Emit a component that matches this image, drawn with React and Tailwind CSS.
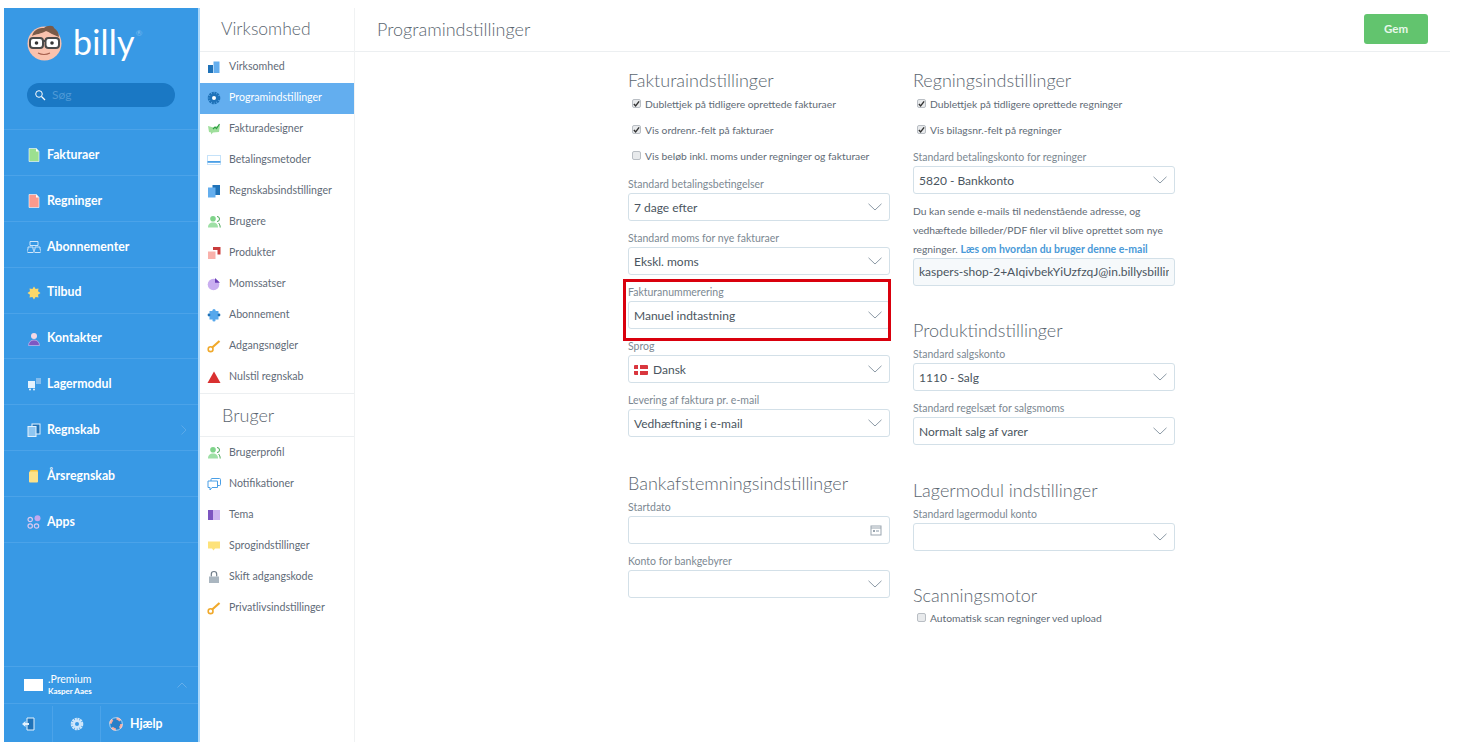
import React from "react";

const S = ({ children, size = 14, vb = "0 0 14 14" }) => (
  <svg width={size} height={size} viewBox={vb} className="shrink-0">{children}</svg>
);

const icons = {
  doc: (f, d) => (<S><path d="M2 .5h7.5L12 3.5V13.5H2z" fill={f} stroke="#fff" strokeWidth=".6" /><path d="M9 .5l3 3H9z" fill={d} /></S>),
  sub: () => (<S><path d="M3 1.5h8v4h-8zM1 7h5v2.5a1.5 1.5 0 01-1 3h-3a1.5 1.5 0 01-1-3zM8 7h5v2.5a1.5 1.5 0 01-1 3h-3a1.5 1.5 0 01-1-3z" fill="none" stroke="#cfe6fa" strokeWidth="1" /></S>),
  star: () => (<S><path d="M7 .5l1.6 2.4 2.9-.5-.5 2.9L13.5 7 11 8.7l.5 2.9-2.9-.5L7 13.5l-1.6-2.4-2.9.5.5-2.9L.5 7 3 5.3l-.5-2.9 2.9.5z" fill="#fcd86a" /></S>),
  person: () => (<S><circle cx="7" cy="4" r="3" fill="#f4d8e4" /><path d="M1.5 13.5c0-3.5 2.5-5.5 5.5-5.5s5.5 2 5.5 5.5z" fill="#7e57c2" stroke="#d9c8f0" strokeWidth=".6" /></S>),
  lager: () => (<S><rect x="1" y="4" width="7" height="7" fill="#e4f2fd" /><rect x="9" y="1" width="5" height="6" fill="#83bdee" /><circle cx="3" cy="12.5" r="1" fill="#e4f2fd" /><circle cx="7" cy="12.5" r="1" fill="#e4f2fd" /></S>),
  regn: () => (<S><rect x="5" y="1" width="8" height="10" fill="#1f72b8" stroke="#e4f2fd" /><rect x="1" y="3.5" width="8" height="10" fill="#8fc6f1" stroke="#e4f2fd" /></S>),
  aars: () => (<S><rect x="3" y="1" width="8" height="11" rx="1" fill="#f9c740" /><rect x="2" y="2.5" width="9" height="11" rx="1" fill="#fde28a" /></S>),
  apps: () => (<S><circle cx="3.2" cy="4.5" r="2.2" fill="none" stroke="#d9c8f0" strokeWidth="1.2" /><circle cx="10.5" cy="3.2" r="3" fill="#c4a8ee" /><circle cx="3.2" cy="11" r="2.2" fill="none" stroke="#d9c8f0" strokeWidth="1.2" /><circle cx="9.5" cy="11" r="2.2" fill="none" stroke="#d9c8f0" strokeWidth="1.2" /></S>),
  bars: () => (<S><rect x="1" y="5" width="5" height="8" fill="#1f72b8" /><rect x="6.5" y="1.5" width="6" height="11.5" fill="#64aeee" /></S>),
  gear: (bg = "#1f72b8", c = "#fff") => (<S><circle cx="7" cy="7" r="5" fill="none" stroke={bg} strokeWidth="2.6" strokeDasharray="2 .6" /><circle cx="7" cy="7" r="4.4" fill={bg} /><circle cx="7" cy="7" r="2" fill={c} /></S>),
  design: () => (<S><path d="M1 4l5.5 1.5L13 3l-1 7-6 .5-2 2v-2L2 10z" fill="#9fdf9c" /><path d="M6 7l2-2 1.5 1.5L12.5 2" fill="none" stroke="#2f9e44" strokeWidth="1.2" /></S>),
  card: () => (<S><rect x=".5" y="2.5" width="13" height="9" fill="#fff" stroke="#c5e2f9" /><rect x=".5" y="8" width="13" height="1.8" fill="#4a9fe6" /></S>),
  regnDark: () => (<S><rect x="5.5" y="1" width="7.5" height="10" fill="#1f72b8" /><rect x="1" y="3.5" width="7.5" height="10" fill="#64aeee" /></S>),
  users: () => (<S><circle cx="6" cy="3.8" r="2.8" fill="#7fd48a" /><path d="M1 12.5c0-3.5 2-5 5-5s5 1.5 5 5z" fill="#9fe0a6" /><path d="M10 1.5a2.5 2.5 0 010 5M11.5 8c1 1 1.7 2.5 1.7 4.5" fill="none" stroke="#4aa657" /></S>),
  products: () => (<S><rect x="1" y="5.5" width="7.5" height="7.5" fill="#f9b1ab" /><path d="M6 1h7.5v7.5h-3V4H6z" fill="#c93c3c" /></S>),
  pie: () => (<S><circle cx="6.5" cy="7.5" r="5.8" fill="#c9aef0" /><path d="M8 1l5 4.8H8z" fill="#6a3fb5" /></S>),
  puzzle: () => (<S><rect x="2.5" y="3" width="9" height="8.5" fill="#57a8ec" /><circle cx="7" cy="2.5" r="1.6" fill="#57a8ec" /><circle cx="7" cy="12" r="1.6" fill="#57a8ec" /><circle cx="2" cy="7" r="1.4" fill="#1f72b8" /><circle cx="12" cy="7" r="1.4" fill="#1f72b8" /></S>),
  key: () => (<S><circle cx="3.6" cy="10.2" r="2.4" fill="none" stroke="#f0a92b" strokeWidth="1.6" /><path d="M5.2 8.5L12.5 2" stroke="#f0a92b" strokeWidth="2.2" /></S>),
  warn: () => (<S><path d="M7 1.5L13.5 13H.5z" fill="#d93030" /></S>),
  chat: () => (<S><rect x="4" y="1.5" width="9.5" height="7" rx="1" fill="#fff" stroke="#4a9fe6" /><path d="M1 4h9.5v6.5H5L3 13v-2.5H1z" fill="#fff" stroke="#4a9fe6" /></S>),
  theme: () => (<S><rect x="1" y="2" width="5" height="10" fill="#7c55c0" /><rect x="6" y="2" width="7" height="10" fill="#cdb6f0" /></S>),
  bubble: () => (<S><path d="M1 2.5h12v7H8l-1.5 2-1.5-2H1z" fill="#fde27a" /></S>),
  lock: () => (<S><path d="M4.3 6.5V4.2a2.7 2.7 0 015.4 0v2.3" fill="none" stroke="#6f7c88" strokeWidth="1.2" /><rect x="2" y="6.5" width="10" height="6.5" fill="#aab6c0" /></S>),
};

const mainNav = [
  ["Fakturaer", icons.doc("#9ce08f", "#fff")],
  ["Regninger", icons.doc("#fb9a8d", "#fff")],
  ["Abonnementer", icons.sub()],
  ["Tilbud", icons.star()],
  ["Kontakter", icons.person()],
  ["Lagermodul", icons.lager()],
  ["Regnskab", icons.regn(), true],
  ["Årsregnskab", icons.aars()],
  ["Apps", icons.apps()],
];

const companyNav = [
  ["Virksomhed", icons.bars()],
  ["Programindstillinger", icons.gear("#1f72b8", "#fff"), true],
  ["Fakturadesigner", icons.design()],
  ["Betalingsmetoder", icons.card()],
  ["Regnskabsindstillinger", icons.regnDark()],
  ["Brugere", icons.users()],
  ["Produkter", icons.products()],
  ["Momssatser", icons.pie()],
  ["Abonnement", icons.puzzle()],
  ["Adgangsnøgler", icons.key()],
  ["Nulstil regnskab", icons.warn()],
];

const userNav = [
  ["Brugerprofil", icons.users()],
  ["Notifikationer", icons.chat()],
  ["Tema", icons.theme()],
  ["Sprogindstillinger", icons.bubble()],
  ["Skift adgangskode", icons.lock()],
  ["Privatlivsindstillinger", icons.key()],
];

const Chevron = () => (
  <svg width="14" height="8" viewBox="0 0 14 8" className="shrink-0"><path d="M.5 .8L7 7l6.5-6.2" fill="none" stroke="#8c9aa6" strokeWidth="1" /></svg>
);

const Logo = () => (
  <svg width="36" height="36" viewBox="0 0 36 36" className="mt-[-5px] shrink-0">
    <circle cx="17.5" cy="18.5" r="17" fill="#f9c2ae" />
    <path d="M5 11C7 4 12 3 17 3c3-3 10-3 10 0 3 2 5 5 5 9-6-2-10-5-13-6-5 3-10 3-14 5z" fill="#7a5a48" />
    <rect x="3" y="13" width="13" height="10" rx="3" fill="#fff" stroke="#4a4a4a" strokeWidth="2" />
    <rect x="18.5" y="13" width="13.5" height="10" rx="3" fill="#fff" stroke="#4a4a4a" strokeWidth="2" />
    <path d="M16 16h3" stroke="#4a4a4a" strokeWidth="2" />
    <circle cx="9.5" cy="18" r="1.8" fill="#333" />
    <circle cx="25" cy="18" r="1.8" fill="#333" />
    <path d="M11 28c4 2 8 2 12 0" fill="none" stroke="#a55f4d" strokeWidth="1.1" />
  </svg>
);

const Select = ({ value, flag, empty, icon }) => (
  <div className="flex h-[28px] items-center justify-between rounded-[3px] border border-[#d3e0e8] bg-white pl-[5px] pr-[7px] text-[12px] text-[#4a5560]">
    <span className="flex items-center gap-[5px] pt-[1px]">
      {flag && (
        <svg width="14" height="10" viewBox="0 0 14 10"><rect width="14" height="10" rx="1" fill="#d9363e" /><rect x="4" width="2" height="10" fill="#fff" /><rect y="4" width="14" height="2" fill="#fff" /></svg>
      )}
      {!empty && value}
    </span>
    {icon || <Chevron />}
  </div>
);

const Field = ({ label, className = "", ...p }) => (
  <div className={className}>
    <div className="flex h-[18px] items-center pt-[1px] text-[10.5px] text-[#7c8892]">{label}</div>
    <Select {...p} />
  </div>
);

const Heading = ({ children, className = "" }) => (
  <h2 className={`flex h-[21px] items-center text-[18px] font-light text-[#5b6670] ${className}`}>{children}</h2>
);

const Check = ({ label, checked, className = "" }) => (
  <label className={`flex h-[26px] items-center pt-[2px] text-[10.3px] text-[#5f6b76] ${className}`}>
    <span className="ml-[4px] mr-[4px] mb-[3px] flex h-[9px] w-[9px] items-center justify-center rounded-[2px] border border-[#b9bec4] bg-[#e8eaec]">
      {checked && <svg width="8" height="8" viewBox="0 0 8 8"><path d="M1 4l2 2.3L7 1" fill="none" stroke="#333" strokeWidth="1.6" /></svg>}
    </span>
    {label}
  </label>
);

const SubItem = ({ label, icon, active, raised }) => (
  <div className={`flex h-[31px] items-center gap-[8px] pl-[7px] text-[10.6px] ${raised ? "pb-[2px]" : ""} ${active ? "bg-[#63aeef] text-white" : "text-[#5f6b78]"}`}>
    {icon}
    <span>{label}</span>
  </div>
);

export default function App() {
  return (
    <div className="flex h-[750px] w-[1457px] overflow-hidden bg-white py-[8px] pl-[4px] font-['Lato','Open_Sans',sans-serif]">
      <aside className="flex w-[194px] shrink-0 flex-col bg-[#3899e5] text-white">
        <div className="h-[122px] shrink-0 border-b border-[#4ba3e9] pl-[23px]">
          <div className="flex h-[75px] items-center">
            <Logo />
            <span className="ml-[10px] mt-[-7px] text-[34px] font-normal leading-none tracking-[.2px]">billy</span>
            <span className="mb-[26px] ml-[1px] text-[8px] text-[#7fbff0]">®</span>
          </div>
          <div className="flex h-[24px] w-[148px] items-center gap-[6px] rounded-full bg-[#1a78c4] pl-[7px] text-[12px] text-[#4f9ad6]">
            <svg width="12" height="12" viewBox="0 0 12 12"><circle cx="5" cy="5" r="3.3" fill="none" stroke="#fff" /><path d="M7.5 7.5L11 11" stroke="#fff" strokeWidth="1.3" /></svg>
            <span>Søg</span>
          </div>
        </div>
        {mainNav.map(([label, icon, arrow]) => (
          <div key={label} className="flex h-[45.9px] shrink-0 items-center gap-[7px] border-b border-[#4ba3e9] pl-[23px] pr-[11px] pt-[5px] text-[12.3px] font-bold">
            <span className="flex w-[13px] justify-center">{icon}</span>
            <span>{label}</span>
            {arrow && (
              <svg width="6" height="10" viewBox="0 0 6 10" className="ml-auto"><path d="M.5.5L5 5 .5 9.5" fill="none" stroke="#5aa9e8" /></svg>
            )}
          </div>
        ))}
        <div className="flex-1" />
        <div className="flex h-[37px] shrink-0 items-center border-t border-[#4ba3e9] pl-[20px] pr-[11px]">
          <div className="h-[12px] w-[19px] bg-white" />
          <div className="ml-[5px] flex flex-col leading-[12px]">
            <span className="text-[10.5px]">.Premium</span>
            <span className="text-[8px] font-bold">Kasper Aaes</span>
          </div>
          <svg width="10" height="6" viewBox="0 0 10 6" className="ml-auto"><path d="M.5 5.5L5 1l4.5 4.5" fill="none" stroke="#64aeea" /></svg>
        </div>
        <div className="flex h-[39px] shrink-0 border-t border-[#4ba3e9] pt-[2px]">
          <div className="flex w-[49px] items-center justify-center border-r border-[#4ba3e9]">
            <S size={14}><path d="M6 1h7v12H6z" fill="#1f72b8" stroke="#e4f2fd" /><path d="M1 7l3.5-3v2H8v2H4.5v2z" fill="#e4f2fd" /></S>
          </div>
          <div className="flex w-[48px] items-center justify-center border-r border-[#4ba3e9]">{icons.gear("#cfe6fa", "#3899e5")}</div>
          <div className="flex items-center gap-[7px] pl-[8px] text-[12.3px] font-bold">
            <S size={14}><circle cx="7" cy="7" r="5.5" fill="#2a7fc8" stroke="#f3aaa0" strokeWidth="2.6" strokeDasharray="4.3 4.3" /><circle cx="7" cy="7" r="6.4" fill="none" stroke="#fff" strokeWidth=".5" /></S>
            <span>Hjælp</span>
          </div>
        </div>
      </aside>

      <nav className="flex w-[157px] shrink-0 flex-col border-l-2 border-r border-l-[#aad8fb] border-r-[#f0f2f3]">
        <div className="flex h-[44px] shrink-0 items-center border-b border-[#eceff1] pl-[21px] text-[17.5px] font-light text-[#5b6670]">Virksomhed</div>
        <div>
          {companyNav.map(([label, icon, active]) => (
            <SubItem key={label} label={label} icon={icon} active={active} raised />
          ))}
        </div>
        <div className="flex h-[44px] shrink-0 items-center border-y border-[#eceff1] pl-[22px] pt-[1px] text-[18px] font-light text-[#5b6670]">Bruger</div>
        <div>
          {userNav.map(([label, icon]) => (
            <SubItem key={label} label={label} icon={icon} />
          ))}
        </div>
      </nav>

      <main className="flex w-[1095px] shrink-0 flex-col">
        <header className="flex h-[44px] shrink-0 items-center justify-between border-b border-[#eceff1] pl-[22px] pr-[22px]">
          <h1 className="text-[18px] font-light text-[#5b6670]">Programindstillinger</h1>
          <button className="mt-[-2px] flex h-[30px] w-[64px] items-center justify-center rounded-[3px] bg-[#62c46e] text-[11.5px] font-bold text-[#e8f8ea]">Gem</button>
        </header>
        <div className="relative flex gap-[23px] pl-[273px] pt-[18px]">
          <section className="w-[262px]">
            <Heading>Fakturaindstillinger</Heading>
            <Check checked label="Dublettjek på tidligere oprettede fakturaer" />
            <Check checked label="Vis ordrenr.-felt på fakturaer" />
            <Check label="Vis beløb inkl. moms under regninger og fakturaer" />
            <div className="mt-[6px] flex flex-col gap-[8px]">
              <Field label="Standard betalingsbetingelser" value="7 dage efter" />
              <Field label="Standard moms for nye fakturaer" value="Ekskl. moms" />
              <Field label="Fakturanummerering" value="Manuel indtastning" />
              <Field label="Sprog" value="Dansk" flag />
              <Field label="Levering af faktura pr. e-mail" value="Vedhæftning i e-mail" />
            </div>
            <Heading className="mt-[36px]">Bankafstemningsindstillinger</Heading>
            <div className="mt-[4px] flex flex-col gap-[8px]">
              <Field
                label="Startdato"
                empty
                icon={<svg width="12" height="12" viewBox="0 0 12 12"><rect x="1" y="2" width="10" height="9" fill="none" stroke="#9aa5af" /><path d="M1 4h10" stroke="#9aa5af" /><rect x="3" y="6" width="2" height="2" fill="#9aa5af" /><rect x="6" y="6" width="3" height="2" fill="#c4ccd3" /></svg>}
              />
              <Field label="Konto for bankgebyrer" empty />
            </div>
          </section>
          <section className="w-[262px]">
            <Heading>Regningsindstillinger</Heading>
            <Check checked label="Dublettjek på tidligere oprettede regninger" />
            <Check checked label="Vis bilagsnr.-felt på regninger" />
            <Field className="mt-[5px]" label="Standard betalingskonto for regninger" value="5820 - Bankkonto" />
            <p className="mt-[8px] text-[10.3px] leading-[19px] text-[#5f6b76]">
              Du kan sende e-mails til nedenstående adresse, og vedhæftede billeder/PDF filer vil blive oprettet som nye regninger.{" "}
              <span className="text-[10.5px] font-bold text-[#4a9ad8]">Læs om hvordan du bruger denne e-mail</span>
            </p>
            <div className="mt-[-1px] flex h-[28px] items-center rounded-[3px] border border-[#d3e0e8] bg-[#f6f9fb] px-[5px] text-[12px] text-[#4a5560]">
              <div className="overflow-hidden whitespace-nowrap">kaspers-shop-2+AIqivbekYiUzfzqJ@in.billysbilling.com</div>
            </div>
            <Heading className="mt-[34px]">Produktindstillinger</Heading>
            <div className="mt-[4px] flex flex-col gap-[8px]">
              <Field label="Standard salgskonto" value="1110 - Salg" />
              <Field label="Standard regelsæt for salgsmoms" value="Normalt salg af varer" />
            </div>
            <Heading className="mt-[35px]">Lagermodul indstillinger</Heading>
            <Field className="mt-[4px]" label="Standard lagermodul konto" empty />
            <Heading className="mt-[34px]">Scanningsmotor</Heading>
            <Check className="mt-[-1px]" label="Automatisk scan regninger ved upload" />
          </section>
          <div className="pointer-events-none absolute left-[268px] top-[227px] h-[62px] w-[268px] border-[3px] border-[#d9000d]" />
        </div>
      </main>
    </div>
  );
}
